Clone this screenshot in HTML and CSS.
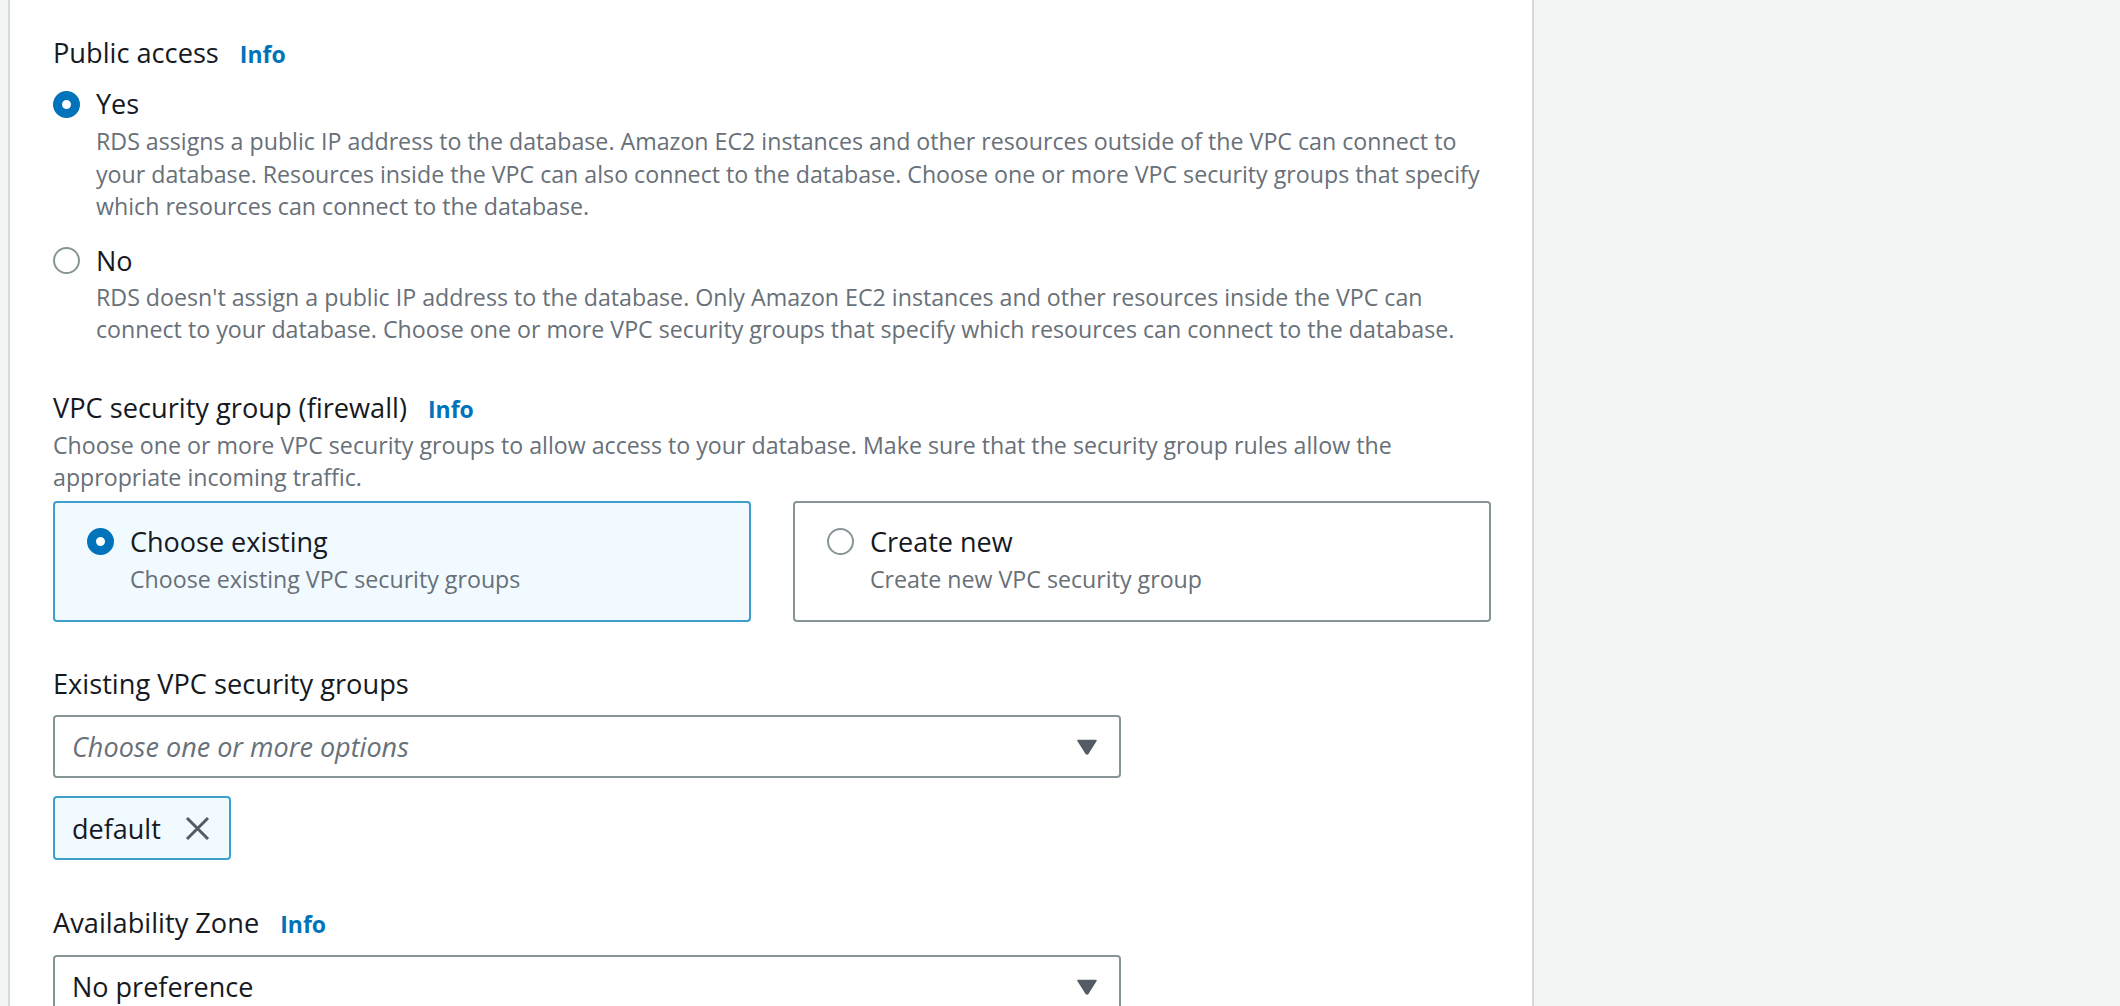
FILE: index.html
```html
<!DOCTYPE html>
<html lang="en">
<head>
<meta charset="utf-8">
<title>Connectivity</title>
<link rel="stylesheet" href="styles.css">
</head>
<body>
<div class="page">
  <main class="panel">
    <section class="field field-first">
      <div class="label-row"><span class="label">Public access</span><a class="info">Info</a></div>
      <div class="radio-group">
        <div class="radio-item">
          <span class="radio checked"></span>
          <div class="radio-text">
            <div class="radio-label">Yes</div>
            <p class="desc">RDS assigns a public IP address to the database. Amazon EC2 instances and other resources outside of the VPC can connect to your database. Resources inside the VPC can also connect to the database. Choose one or more VPC security groups that specify which resources can connect to the database.</p>
          </div>
        </div>
        <div class="radio-item radio-item-next">
          <span class="radio"></span>
          <div class="radio-text">
            <div class="radio-label">No</div>
            <p class="desc">RDS doesn't assign a public IP address to the database. Only Amazon EC2 instances and other resources inside the VPC can connect to your database. Choose one or more VPC security groups that specify which resources can connect to the database.</p>
          </div>
        </div>
      </div>
    </section>

    <section class="field">
      <div class="label-row"><span class="label">VPC security group (firewall)</span><a class="info">Info</a></div>
      <p class="desc field-desc">Choose one or more VPC security groups to allow access to your database. Make sure that the security group rules allow the appropriate incoming traffic.</p>
      <div class="tiles">
        <div class="tile selected">
          <span class="radio checked"></span>
          <div class="radio-text">
            <div class="radio-label">Choose existing</div>
            <p class="desc tile-desc">Choose existing VPC security groups</p>
          </div>
        </div>
        <div class="tile">
          <span class="radio"></span>
          <div class="radio-text">
            <div class="radio-label">Create new</div>
            <p class="desc tile-desc">Create new VPC security group</p>
          </div>
        </div>
      </div>
    </section>

    <section class="field">
      <div class="label-row"><span class="label">Existing VPC security groups</span></div>
      <div class="select">
        <span class="placeholder">Choose one or more options</span>
        <svg class="caret" width="20" height="16" viewBox="0 0 20 16"><path d="M1 1.5 H19 L10.8 14.6 Q10 15.6 9.2 14.6 Z" fill="#545b64" stroke="#545b64" stroke-width="1.5" stroke-linejoin="round"/></svg>
      </div>
      <div class="tokens">
        <div class="token">
          <span class="token-text">default</span>
          <svg class="token-x" width="25" height="25" viewBox="0 0 25 25"><path d="M2 2 L23 23 M23 2 L2 23" stroke="#545b64" stroke-width="3" stroke-linecap="butt" fill="none"/></svg>
        </div>
      </div>
    </section>

    <section class="field field-last">
      <div class="label-row"><span class="label">Availability Zone</span><a class="info">Info</a></div>
      <div class="select">
        <span class="value">No preference</span>
        <svg class="caret" width="20" height="16" viewBox="0 0 20 16"><path d="M1 1.5 H19 L10.8 14.6 Q10 15.6 9.2 14.6 Z" fill="#545b64" stroke="#545b64" stroke-width="1.5" stroke-linejoin="round"/></svg>
      </div>
    </section>
  </main>
  <aside class="side"></aside>
</div>
</body>
</html>
```

FILE: styles.css
```css
html, body {
  margin: 0;
  padding: 0;
  height: 1006px;
  overflow: hidden;
  background: #f2f3f3;
  font-family: "Open Sans", "Liberation Sans", Arial, sans-serif;
  color: #16191f;
}

.page {
  display: flex;
  height: 1006px;
  padding-left: 8px;
}

.panel {
  width: 1438px;
  flex: none;
  background: #ffffff;
  border-left: 2px solid #d5dbdb;
  border-right: 2px solid #d5dbdb;
  padding: 35px 41px 0 43px;
  overflow: hidden;
}

.side {
  flex: 1;
  background: #f2f3f3;
}

.field {
  margin-top: 44px;
}

.field-first {
  margin-top: 0;
}

.field-last {
  margin-top: 45px;
}

.label-row {
  display: flex;
  align-items: baseline;
  line-height: 36px;
}

.label {
  font-size: 27.2px;
  color: #16191f;
}

.info {
  margin-left: 21px;
  font-size: 23px;
  font-weight: 700;
  color: #0073bb;
}

.desc {
  margin: 0;
  font-size: 23.2px;
  line-height: 32.5px;
  color: #687078;
}

.field-desc {
  margin-top: 2px;
}

.radio-group {
  margin-top: 14px;
}

.radio-item {
  display: grid;
  grid-template-columns: 27px 1fr;
  column-gap: 16px;
}

.radio-item-next {
  margin-top: 20px;
}

.radio {
  width: 27px;
  height: 27px;
  margin-top: 4.5px;
  box-sizing: border-box;
  border-radius: 50%;
  border: 2px solid #879596;
  background: #ffffff;
}

.radio.checked {
  border: 9.5px solid #0073bb;
}

.radio-label {
  font-size: 27px;
  line-height: 36px;
  color: #16191f;
}

.radio-text .desc {
  margin-top: 3px;
}

.radio-item-next .radio-text .desc {
  margin-top: 2px;
}

.tiles {
  display: grid;
  grid-template-columns: 1fr 1fr;
  column-gap: 42px;
  margin-top: 7px;
}

.tile {
  display: grid;
  grid-template-columns: 27px 1fr;
  column-gap: 16px;
  border: 2px solid #879596;
  border-radius: 4px;
  padding: 21px 32px 25px;
  background: #ffffff;
}

.tile.selected {
  border-color: #3d9fca;
  background: #f1faff;
}

.tile .radio-text .desc.tile-desc {
  margin-top: 3px;
}

.select {
  display: flex;
  align-items: center;
  justify-content: space-between;
  box-sizing: border-box;
  width: 1068px;
  height: 63px;
  margin-top: 13px;
  padding: 0 22px 0 17px;
  border: 2px solid #879596;
  border-radius: 4px;
  background: #ffffff;
  font-size: 27px;
}

.placeholder {
  font-style: italic;
  color: #687078;
}

.value {
  color: #16191f;
}

.caret {
  display: block;
}

.tokens {
  display: flex;
  margin-top: 18px;
}

.token {
  display: flex;
  align-items: center;
  gap: 24px;
  box-sizing: border-box;
  height: 64px;
  padding: 0 19px 0 17px;
  border: 2px solid #3d9fca;
  border-radius: 4px;
  background: #f1faff;
  font-size: 27px;
  color: #16191f;
}

.token-x {
  display: block;
}
```
